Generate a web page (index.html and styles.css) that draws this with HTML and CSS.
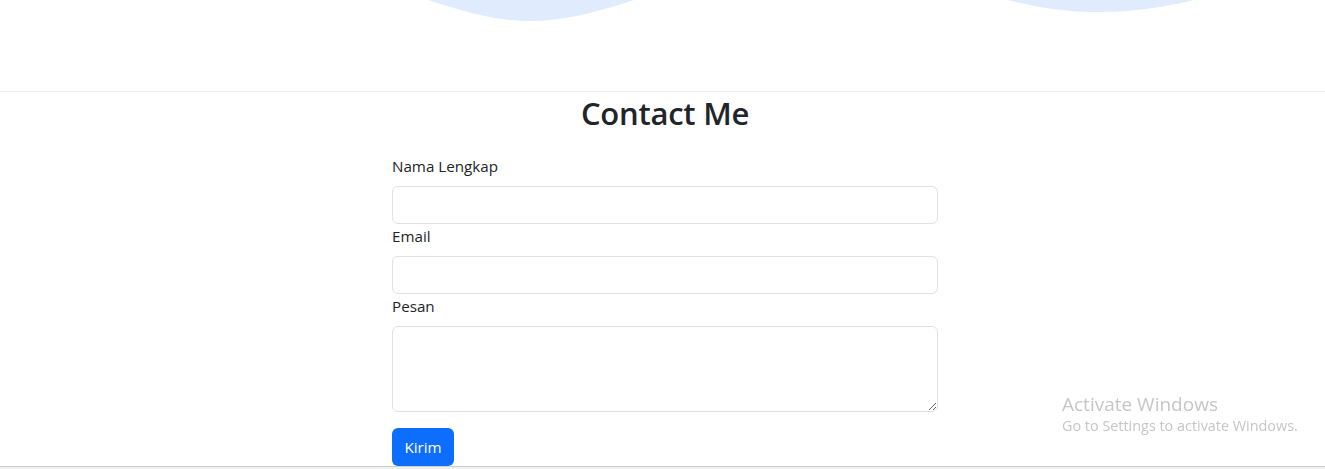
FILE: index.html
```html
<!DOCTYPE html>
<html lang="id">
<head>
<meta charset="utf-8">
<title>Contact Me</title>
<link rel="stylesheet" href="styles.css">
</head>
<body>
<header class="hero">
  <svg class="wave" viewBox="0 0 1325 24" preserveAspectRatio="none" xmlns="http://www.w3.org/2000/svg">
    <path d="M0,0 L428,0 C468,13 498,21 530,21 C562,21 594,13 634,0 L1008,0 C1040,8 1068,12 1100,12 C1132,12 1160,8 1194,0 L1325,0 Z" fill="#e0ebfd"/>
  </svg>
</header>
<main class="contact">
  <h2 class="title">Contact Me</h2>
  <form class="form">
    <label class="label" for="nama">Nama Lengkap</label>
    <input class="field" id="nama" type="text">
    <label class="label" for="email">Email</label>
    <input class="field" id="email" type="email">
    <label class="label" for="pesan">Pesan</label>
    <textarea class="field area" id="pesan"></textarea>
    <button class="btn" type="button">Kirim</button>
  </form>
</main>
<div class="activate">
  <div class="act-title">Activate Windows</div>
  <div class="act-sub">Go to Settings to activate Windows.</div>
</div>
<div class="bottom-bar"></div>
</body>
</html>
```
FILE: styles.css
```css
* { box-sizing: border-box; }
html, body { margin: 0; padding: 0; background: #fff; }
body {
  font-family: "Open Sans", "Noto Sans", sans-serif;
  color: #212529;
  font-size: 16px;
  line-height: 1.5;
  overflow: hidden;
  height: 469px;
}
.hero {
  height: 92px;
  border-bottom: 1px solid #eef3fa;
}
.wave {
  display: block;
  width: 100%;
  height: 24px;
}
.contact {
  display: flex;
  flex-direction: column;
  align-items: center;
  padding-left: 5px;
}
.title {
  margin: 2px 0 22px;
  font-size: 31px;
  line-height: 38px;
  font-weight: 600;
  letter-spacing: -0.25px;
}
.form {
  width: 546px;
  display: flex;
  flex-direction: column;
  align-items: flex-start;
}
.label {
  display: block;
  margin-bottom: 8px;
  font-size: 15.2px;
  line-height: 24px;
}
.field {
  display: block;
  width: 100%;
  height: 38px;
  border: 1px solid #dee2e6;
  border-radius: 6px;
  font: inherit;
  background: #fff;
}
.area {
  height: 86px;
  resize: vertical;
  margin-bottom: 16px;
}
.btn {
  width: 62px;
  height: 38px;
  padding: 0;
  border: 0;
  border-radius: 6px;
  background: #0d6efd;
  color: #fff;
  font-family: inherit;
  font-size: 15.2px;
  line-height: 38px;
  text-align: center;
}
.activate {
  position: fixed;
  left: 1062px;
  top: 392px;
  color: #c6c6c6;
  font-family: "Open Sans", "Noto Sans", sans-serif;
}
.act-title { font-size: 19px; line-height: 24px; }
.act-sub { font-size: 14.4px; line-height: 20px; }
.bottom-bar {
  position: fixed;
  left: 0;
  right: 0;
  bottom: 0;
  height: 3px;
  border-top: 1px solid #d0d0d0;
  background: #f0f0f0;
}
```
